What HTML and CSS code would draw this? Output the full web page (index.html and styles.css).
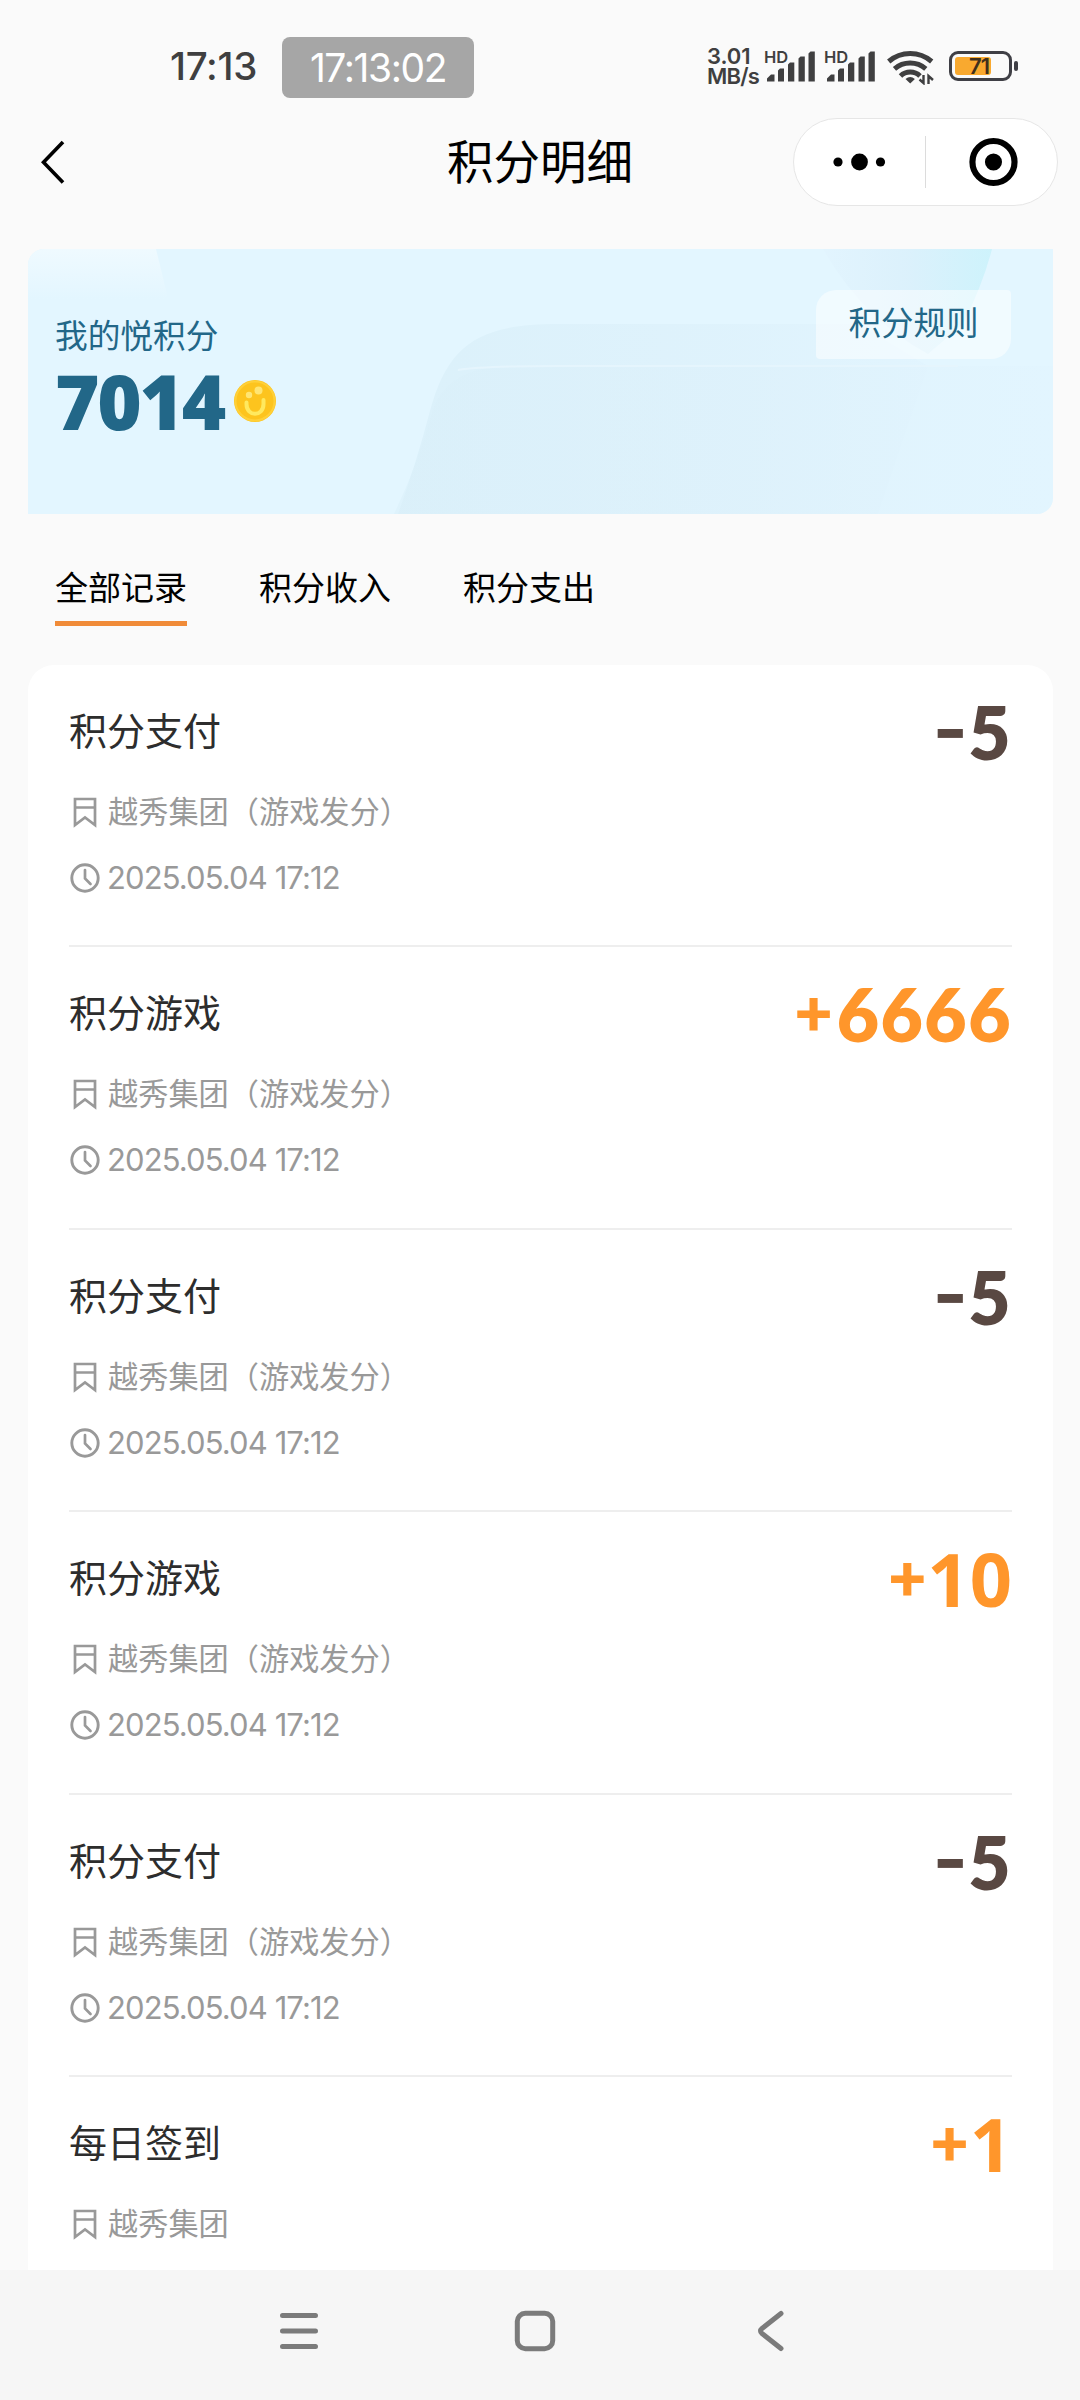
FILE: index.html
```html
<!DOCTYPE html>
<html lang="zh-CN">
<head>
<meta charset="utf-8">
<title>积分明细</title>
<link rel="stylesheet" href="styles.css">
</head>
<body>
<svg class="defs" width="0" height="0">
  <symbol id="bookmark" viewBox="0 0 30 32"><path d="M5 3h20v26l-10-7.500-10 7.500zM5 11.500h20" fill="none" stroke="#999" stroke-width="2.700"/></symbol>
  <symbol id="clock" viewBox="0 0 30 32"><circle cx="15" cy="16" r="13.200" fill="none" stroke="#999" stroke-width="2.900"/><path d="M15 8v8.500l5.500 5.500" fill="none" stroke="#999" stroke-width="2.700" stroke-linecap="round"/></symbol>
  <symbol id="signal" viewBox="0 0 50 32"><path d="M1 31.500v-3l4-4h3.500v7zM12 31.500V20.500l2-2h4v13zM22 31.500V14.500l2-2h4.300v19zM32.500 31.500V8.500l2-2h4.300v25zM42.500 31.500V3.500l2-2h4.300v30z" fill="#3f3f40"/></symbol>
</svg>
<header class="status">
  <span class="clock">17:13</span>
  <span class="timer">17:13:02</span>
  <div class="speed"><span>3.01</span><span>MB/s</span></div>
  <div class="sim"><b>HD</b><svg width="50" height="32"><use href="#signal"/></svg></div>
  <div class="sim"><b>HD</b><svg width="50" height="32"><use href="#signal"/></svg></div>
  <svg class="wifi" width="48" height="36" viewBox="0 0 48 36"><g fill="none" stroke="#3f3f40" stroke-width="5"><path d="M1.700 12.500a33 33 0 0 1 43 0"/><path d="M7.500 19.800a24 24 0 0 1 31.300 0"/><path d="M13.500 27a14 14 0 0 1 19.500 0"/></g><path d="M18.500 30q4.700-4 9.400 0l-4.700 4.500z" fill="#3f3f40"/><path d="M36.500 26v8L32.500 30.500M41.500 35v-8l4.500 4" fill="none" stroke="#3f3f40" stroke-width="2.400"/></svg>
  <div class="battery"><i class="charge"></i><span>71</span></div>
</header>
<nav class="titlebar">
  <svg class="back" width="30" height="48" viewBox="0 0 30 48"><path d="M26 4L6.500 24.200 26 44.500" fill="none" stroke="#000" stroke-width="3.600"/></svg>
  <h1>积分明细</h1>
  <div class="capsule">
    <svg width="131" height="52" viewBox="0 0 131 52"><circle cx="44" cy="26" r="4.600"/><circle cx="65.500" cy="26" r="8.400"/><circle cx="86.500" cy="26" r="4.600"/></svg>
    <svg class="target" width="131" height="52" viewBox="0 0 131 52"><circle cx="68" cy="26" r="21.200" fill="none" stroke="#000" stroke-width="6.200"/><circle cx="68" cy="26" r="8.600"/></svg>
  </div>
</nav>
<section class="summary">
  <svg class="art" viewBox="0 0 1025 265" preserveAspectRatio="none">
    <defs>
      <linearGradient id="swoop" x1="0" x2="1" y1="0" y2="0"><stop offset="0" stop-color="#d9eff9"/><stop offset=".6" stop-color="#ddf1fb"/><stop offset="1" stop-color="#e1f4fe"/></linearGradient>
      <linearGradient id="shine" x1="0" x2="1" y1="0" y2="0"><stop offset="0" stop-color="#e2f4fe"/><stop offset=".5" stop-color="#daf0fb"/><stop offset="1" stop-color="#caf2fb"/></linearGradient>
      <linearGradient id="glow" x1="0" x2="0" y1="0" y2="1"><stop offset="0" stop-color="#effaff"/><stop offset="1" stop-color="#e3f6ff"/></linearGradient>
    </defs>
    <path d="M0 0h128q5 20 12 50H0z" fill="url(#glow)"/>
    <path d="M370 265Q388 215 402 162C420 96 450 75 530 75H830L900 117 850 265z" fill="url(#swoop)" opacity=".75"/>
    <path d="M366 265Q390 215 405 160 418 124 465 118L520 117H1025V265z" fill="url(#swoop)" opacity=".5"/>
    <path d="M430 121Q455 117 530 117H930" fill="none" stroke="#e5f5fd" stroke-width="2"/>
    <path d="M795 0H964Q955 35 935 75L900 105Q835 70 795 0z" fill="url(#shine)" opacity=".85"/>
  </svg>
  <div class="balance">
    <p>我的悦积分</p>
    <div class="total"><strong>7014</strong><svg width="44" height="44" viewBox="0 0 44 44"><circle cx="22" cy="22" r="21" fill="#fdc41e"/><circle cx="22" cy="22" r="19.500" fill="none" stroke="#ffd038" stroke-width="2"/><circle cx="16" cy="16" r="3.200" fill="#ffe573"/><circle cx="25.500" cy="11.500" r="4" fill="#ffe573"/><path d="M13.500 23.500v1.500c0 13 17 13 17 0v-4" fill="none" stroke="#ffe95f" stroke-width="4" stroke-linecap="round"/></svg></div>
  </div>
  <a class="rules">积分规则</a>
</section>
<div class="tabs"><a class="active">全部记录</a><a>积分收入</a><a>积分支出</a></div>
<main class="records">
  <article><div class="row"><h2>积分支付</h2><span class="amount out"><i>-</i>5</span></div><p class="org"><svg width="30" height="32"><use href="#bookmark"/></svg>越秀集团（游戏发分）</p><p class="time"><svg width="30" height="32"><use href="#clock"/></svg>2025.05.04 17:12</p></article>
  <article><div class="row"><h2>积分游戏</h2><span class="amount"><i>+</i>6666</span></div><p class="org"><svg width="30" height="32"><use href="#bookmark"/></svg>越秀集团（游戏发分）</p><p class="time"><svg width="30" height="32"><use href="#clock"/></svg>2025.05.04 17:12</p></article>
  <article><div class="row"><h2>积分支付</h2><span class="amount out"><i>-</i>5</span></div><p class="org"><svg width="30" height="32"><use href="#bookmark"/></svg>越秀集团（游戏发分）</p><p class="time"><svg width="30" height="32"><use href="#clock"/></svg>2025.05.04 17:12</p></article>
  <article><div class="row"><h2>积分游戏</h2><span class="amount plain"><i>+</i>10</span></div><p class="org"><svg width="30" height="32"><use href="#bookmark"/></svg>越秀集团（游戏发分）</p><p class="time"><svg width="30" height="32"><use href="#clock"/></svg>2025.05.04 17:12</p></article>
  <article><div class="row"><h2>积分支付</h2><span class="amount out"><i>-</i>5</span></div><p class="org"><svg width="30" height="32"><use href="#bookmark"/></svg>越秀集团（游戏发分）</p><p class="time"><svg width="30" height="32"><use href="#clock"/></svg>2025.05.04 17:12</p></article>
  <article><div class="row"><h2>每日签到</h2><span class="amount plain"><i>+</i>1</span></div><p class="org"><svg width="30" height="32"><use href="#bookmark"/></svg>越秀集团</p></article>
</main>
<footer class="navbar">
  <svg width="44" height="44" viewBox="0 0 44 44"><path d="M5.500 6.500h33M5.500 22h33M5.500 37.500h33"/></svg>
  <svg width="44" height="44" viewBox="0 0 44 44"><rect x="4.300" y="4.300" width="35.400" height="35.400" rx="8"/></svg>
  <svg width="44" height="44" viewBox="0 0 44 44"><path d="M32 4.500L13 19.500q-3 2.500 0 5L32 39.500"/></svg>
</footer>
</body>
</html>
```
FILE: styles.css
```css
* { box-sizing: border-box; margin: 0; padding: 0; }
body { width: 1080px; height: 2400px; overflow: hidden; display: flex; flex-direction: column; background: #fafafa; font-family: "Noto Sans", "Noto Sans CJK SC", sans-serif; }
svg { display: block; flex: none; }
.defs { position: absolute; }
h1, h2 { font-weight: 400; }
i { font-style: normal; }

.status { height: 114px; flex: none; padding: 32px 0 0 170px; display: flex; align-items: flex-start; color: #3f3f40; white-space: nowrap; }
.clock { width: 112px; height: 70px; font: 500 38.500px/68px "Inter"; letter-spacing: -.3px; }
.timer { width: 192px; height: 61px; margin-top: 5px; border-radius: 8px; background: #a6a6a6; color: #fff; text-align: center; font: 400 39px/62px "Inter"; letter-spacing: -1.4px; }
.speed { width: 58px; margin: 14px 0 0 233px; display: flex; flex-direction: column; font: 600 22px/20px "Inter"; letter-spacing: -.8px; }
.speed span:first-child { letter-spacing: -.1px; }
.sim { width: 60px; margin-top: 18px; position: relative; }
.sim svg { margin-left: 1px; }
.sim b { position: absolute; left: -1px; top: -1px; font: 600 16.500px/16px "Inter"; }
.wifi { margin: 17px 0 0 2px; }
.battery { position: relative; width: 63px; height: 30px; margin: 19px 0 0 14px; border: 3px solid #3f3f45; border-radius: 9px; padding: 3px; }
.battery::after { content: ""; position: absolute; right: -9px; top: 7px; width: 4px; height: 10px; border-radius: 2px; background: #3f3f45; }
.charge { display: block; width: 36px; height: 18px; border-radius: 3px; background: #f9a92f; }
.battery span { position: absolute; left: 17px; top: 2px; font: 600 22px/20px "Inter"; letter-spacing: -1px; color: #40301c; }

.titlebar { height: 97px; flex: none; display: grid; grid-template-columns: 286px 1fr 286px; align-items: center; }
.back { margin: -1px 0 0 37px; }
h1 { text-align: center; font-size: 46.500px; line-height: 60px; margin-top: -3px; color: #000; }
.capsule { width: 265px; height: 88px; margin: -1px 0 0 -1px; display: flex; align-items: center; border: 1px solid #e6e6e6; border-radius: 44px; background: #fff; }
.target { border-left: 1px solid #dcdcdc; }

.summary { position: relative; flex: none; width: 1025px; height: 265px; margin: 38px 0 0 28px; overflow: hidden; border-radius: 16px 0 16px 0; background: #e3f6ff; display: flex; justify-content: space-between; align-items: flex-start; color: #226788; }
.art { position: absolute; inset: 0; width: 100%; height: 100%; }
.balance { position: relative; padding: 65px 0 0 27px; }
.balance p { font-size: 32.700px; line-height: 44px; }
.total { display: flex; align-items: center; gap: 9px; }
.total strong { font: 800 76px/86px "Open Sans"; letter-spacing: -2.300px; }
.rules { position: relative; width: 195px; height: 69px; margin: 41px 42px 0 0; border-radius: 20px 4px 20px 4px; background: rgba(255,255,255,.5); text-align: center; font-size: 32.500px; line-height: 66px; }

.tabs { flex: none; height: 151px; padding: 48px 0 0 55px; display: flex; gap: 72px; align-items: flex-start; font-size: 33px; line-height: 51px; color: #000; }
.tabs a { border-bottom: 5px solid transparent; height: 64px; }
.tabs .active { border-color: #f08b38; }

.records { flex: none; width: 1025px; height: 1605px; margin-left: 28px; padding: 0 41px; border-radius: 26px 26px 0 0; background: #fff; overflow: hidden; }
article { height: 282.400px; border-bottom: 2px solid #eee; }
.row { height: 108px; padding-top: 24px; display: flex; justify-content: space-between; }
h2 { font-size: 38px; line-height: 82px; color: #2d2d2d; }
.amount { display: flex; align-items: center; height: 86px; font: 800 73px/86px "Lato"; color: #ff962b; letter-spacing: 1.500px; }
.amount i { font: 700 65px/78px "Inter"; height: 86px; letter-spacing: 0; margin-right: 1px; }
.amount.out { color: #594842; }
.amount.out i { font: 700 76px/78px "Inter"; margin-right: 0; }
.amount.plain { font: 700 74px/86px "Noto Sans"; letter-spacing: 0; }
.amount.plain i { margin-right: -2px; }
.org, .time { display: flex; align-items: center; gap: 8px; height: 66px; padding-left: 1px; color: #999; font-size: 30.200px; line-height: 66px; }
.org { height: 78px; }
.time { margin-top: -6px; gap: 7px; font: 400 31px/66px "Inter"; letter-spacing: -.9px; }

.navbar { flex: none; height: 130px; padding-top: 39px; display: flex; justify-content: center; gap: 192px; background: #f6f6f6; padding-right: 10px; }
.navbar svg { fill: none; stroke: #7b7b7b; stroke-width: 5; stroke-linecap: round; stroke-linejoin: round; }
```
